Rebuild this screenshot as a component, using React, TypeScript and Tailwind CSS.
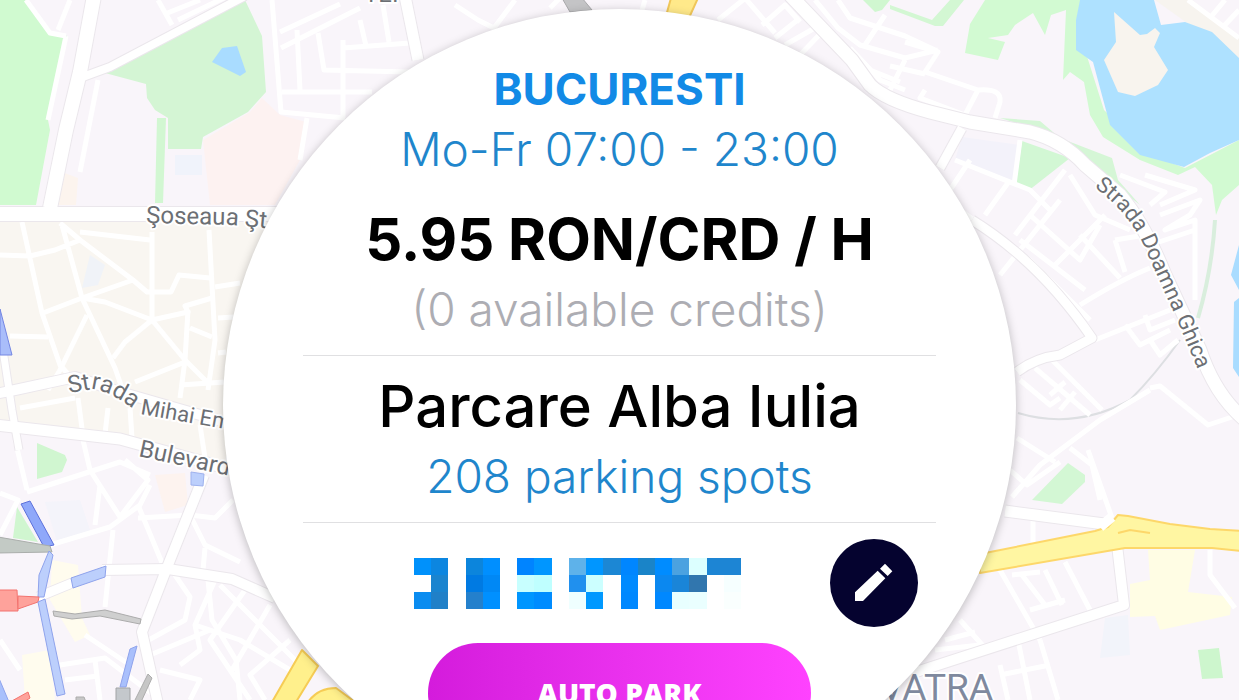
import React from "react";

const ROAD_MINOR = [
  // north-west blocks
  "M98,80 L80,172 M158,0 L172,25 M165,14 L200,0 M178,20 L232,-6 M26,0 L50,33 L66,36 M48,120 L66,36 M70,0 L58,30",
  "M272,0 L281,112 L345,118 M280,32 L340,4 M281,48 L360,8 M297,30 L300,90 M282,92 L372,92 M307,118 L300,160 M318,33 L324,70 L410,72 M343,40 L343,118 M343,48 L410,43 M360,20 L366,46 M383,5 L389,42 M455,5 L478,20 L494,28 L515,0",
  "M645,0 L642,10 M560,-2 L550,8",
  // north-east blocks
  "M718,20 L748,-4 M745,-2 L775,33 M762,25 L785,5 L800,22 M775,38 L800,18 M785,45 L820,25 M800,55 L822,32 M815,0 L838,28 L860,45 L905,58 L938,50 M838,0 L850,18 L905,36 L935,50 M865,45 L885,15 M905,60 L890,90 M850,48 L880,80 L905,90 M870,70 L900,82",
  "M905,42 L938,52 L925,72 L978,90 L965,115 L920,98 L925,90 M978,90 Q1002,88 1000,102 L995,118 M890,66 L925,74",
  "M1188,0 L1239,38 M1210,18 L1225,0 M1222,28 L1239,10 M955,160 L1030,190 L1050,210 M1020,140 L1014,185 M950,190 L970,160 M985,215 L1010,180 M1015,235 L1065,170 M1030,215 L1080,260 L1100,225 M1070,175 L1095,215 L1130,230 M960,210 L1030,260 L1090,320 M1000,275 L1060,200 M1020,240 L1085,290 M1055,265 L1105,215 M1080,235 L1120,278 M1080,305 Q1120,280 1150,268 M1115,240 L1125,272 M1115,240 L1145,235",
  "M1120,175 L1165,192 L1150,205 M1145,175 L1195,190 L1160,205 M1160,215 L1200,200 L1190,215 L1165,230 L1195,220 L1195,300 M1150,245 L1195,230",
  // eastern blocks
  "M1095,340 L1170,310 M1125,325 L1140,345 L1170,330 M1145,315 L1150,330 L1175,320 M1150,340 L1160,355 L1178,340 M1020,380 L1050,405 L1060,398 M1035,368 L1090,415 M1052,360 L1102,410 M1050,395 L1065,382 M1060,410 L1075,392 M1150,388 L1160,386 L1208,425 L1235,416",
  "M1150,390 L1100,420 L1040,465 L1012,497 M1017,438 L1055,462 M1070,448 L1092,465 L1100,500 M1010,470 L1027,485 L1060,462 M1088,450 L1112,518 M1033,520 L1033,545",
  "M1000,570 L1040,640 M1012,575 L1040,572 M1022,575 L1045,605 M1045,570 L1062,605 M1065,562 L1090,610 M1030,610 L1065,600 M960,620 L985,648 M945,640 L975,632 M935,650 L980,645 M1210,550 L1210,575 L1235,608 M1000,665 L1008,700 M1018,640 L1030,700 M1040,640 L1058,700 M1000,675 L1050,665",
  // old-town blocks
  "M0,255 L30,256 L55,250 L80,240 L60,223 M22,222 L42,313 L60,365 L75,382 M62,225 L82,298 L115,368 L122,388 M80,232 L150,240 M80,240 L133,280 L147,292 L171,292 L179,275 L210,278",
  "M152,232 L152,320 M133,280 L82,298 L43,313 M82,298 L105,302 L152,320 L188,312 L185,306 L212,298 M152,320 L125,342 L113,358 M152,320 L185,360 L210,385 M209,230 L215,340 L208,390 M87,315 L60,370 L48,390",
  "M188,310 L185,360 L180,398 M135,382 L185,362 M190,328 L212,337 M10,336 L48,337 M215,287 L240,283 M218,318 L234,317 M218,353 L226,352 M180,385 L225,382 M20,408 L75,398 M78,398 L83,436 M108,408 L105,434 M130,408 L132,438 M200,425 L205,458",
  // south-western blocks
  "M15,440 L27,490 M0,493 L18,500 L0,535 M27,492 L120,462 L150,475 M83,440 L90,470 L120,517 L148,480 L125,460 M100,485 L95,525 M50,545 L110,527 L140,505 L150,485 M138,505 L165,570 M113,530 L105,607 M138,518 L190,515 L215,518 L233,500",
  "M190,515 L205,545 L240,562 M205,548 L203,570 M208,580 L212,620 L236,660 L240,700 M175,575 L190,597 L185,620 L145,642 M210,630 L150,655 M215,580 L195,625 L200,650 L180,665 M220,585 L300,665 M245,590 L210,640 L250,700 M270,605 L232,670 M195,625 L240,640 L290,670 M160,670 L200,680 L190,700 M290,640 L250,675 L265,700",
  "M0,640 L20,670 M60,665 L105,658 L160,700 M95,660 L100,700 M85,635 L130,665 M65,680 L98,676",
];

const ROAD_MAIN = [
  { d: "M94,-4 L80,72 L66,130 L50,208", w: 14 },
  { d: "M-5,214 L280,214 L310,222", w: 14 },
  { d: "M80,78 L110,67 L245,-4", w: 8 },
  { d: "M405,-4 L418,60", w: 11 },
  { d: "M-5,394 L15,390 L75,377 L120,392 L235,425", w: 10 },
  { d: "M3,350 L12,410 L19,450", w: 7 },
  { d: "M-5,425 L120,439 L240,472", w: 11 },
  { d: "M204,475 L168,565 L142,632 L158,704", w: 10 },
  { d: "M102,570 L168,569 L232,579 L275,598", w: 10 },
  { d: "M38,597 L72,583", w: 9 },
  { d: "M790,-5 L852,60 L870,85 Q885,100 930,112 L970,122 L1030,132 Q1062,140 1085,165 L1120,195 Q1145,225 1165,275 L1200,350 Q1215,395 1245,420", w: 13 },
  { d: "M972,220 Q1040,262 1092,338 L1060,355 Q1035,358 1017,372", w: 9 },
  { d: "M962,128 L940,168", w: 9 },
  { d: "M1005,511 L1112,525", w: 11 },
  { d: "M1117,545 L1124,605 L1040,632 L910,674", w: 10 },
];

type Shape = { d: string; fill: string; stroke?: string };

const AREAS: Shape[] = [
  { d: "M0,222 L300,222 L240,470 L120,440 L0,424Z", fill: "#f9f6f1" },
  { d: "M0,0 L25,0 L52,32 L67,36 L48,120 L50,130 L36,205 L0,205Z", fill: "#d0fad0" },
  { d: "M105,73 L245,0 L262,36 L266,92 L248,112 L203,137 L201,149 L168,149 L168,118 L155,110 L147,98 L146,84Z", fill: "#d4f5d4" },
  { d: "M157,118 L166,118 L163,203 L155,203Z", fill: "#d2f7d2" },
  { d: "M212,62 L222,48 L237,46 L246,72 L240,76Z", fill: "#a9dcff" },
  { d: "M203,140 L250,112 L262,98 L280,115 L306,122 L300,160 L275,205 L210,205Z", fill: "#fdf2f1" },
  { d: "M175,155 L202,155 L202,175 L175,175Z", fill: "#f0f3fb" },
  { d: "M62,172 L78,178 L76,205 L58,205Z", fill: "#fcf4ee" },
  { d: "M90,255 L105,265 L98,285 L82,288Z", fill: "#f0f3f8" },
  { d: "M37,443 L65,455 L67,460 L62,472 L37,479Z", fill: "#d0f6d0" },
  { d: "M17,507 L38,542 L13,538Z", fill: "#d0f6d0" },
  { d: "M155,475 L185,473 L188,505 L165,512Z", fill: "#fdf3ef" },
  { d: "M45,502 L80,500 L90,530 L58,545Z", fill: "#f4f4fa" },
  { d: "M52,560 L78,565 L82,618 L90,635 L75,642 L50,600Z", fill: "#fffcee" },
  { d: "M22,655 L50,650 L55,700 L25,700Z", fill: "#fffcee" },
  { d: "M863,0 L890,0 L882,10 L875,12Z", fill: "#d0f7d0" },
  { d: "M890,5 L932,20 L950,0 L964,0 L943,26 L935,26 L890,9Z", fill: "#d3f7d3" },
  { d: "M985,0 L1085,0 L1085,50 L1104,110 L1150,155 L1185,168 L1239,140 L1239,185 L1222,200 L1216,215 L1212,185 L1195,167 L1178,175 L1140,160 L1103,137 L1090,115 L1084,82 L1070,72 L1063,80 L1066,10 L1051,15 L1045,35 L1033,13 L1015,25 L1008,35 L988,38 L1005,42 L998,60 L965,53 L970,24Z", fill: "#d2fad2" },
  { d: "M1000,118 L1040,121 L1060,138 L1112,158 L1118,180 L1140,205 L1115,185 L1085,165 L1050,133Z", fill: "#d5f6d6" },
  { d: "M1022,141 L1070,158 L1028,191 L1016,183Z", fill: "#d2f7d4" },
  { d: "M1155,0 L1192,0 L1239,38 L1239,60Z", fill: "#f7f4ef" },
  { d: "M1080,0 L1154,0 L1161,25 L1185,22 L1212,32 L1239,58 L1239,140 L1210,153 L1184,167 L1140,155 L1110,125 L1093,62 L1076,50 L1076,20Z", fill: "#aee1ff" },
  { d: "M1114,12 L1140,35 L1147,34 L1155,28 L1160,33 L1154,47 L1168,70 L1158,85 L1135,96 L1118,92 L1104,60 L1116,42Z", fill: "#f8f4ee" },
  { d: "M1239,245 L1231,275 L1239,290Z M1239,298 L1234,302 L1233,368 L1239,377Z", fill: "#a9dcff" },
  { d: "M962,137 L1020,145 L1012,183 L955,160Z", fill: "#f3f2fa" },
  { d: "M1032,500 L1068,463 L1085,475 L1085,482 L1062,504Z", fill: "#d3f7d4" },
  { d: "M1148,550 L1195,550 L1188,592 L1232,597 L1230,615 L1160,630 L1155,616 L1130,617 L1130,584 L1150,580Z", fill: "#fffde4" },
  { d: "M1198,650 L1219,648 L1223,678 L1202,679Z", fill: "#cdf6cd" },
  { d: "M1105,618 L1128,615 L1130,655 L1100,658Z", fill: "#f2f4fa" },
];

const TRAFFIC: Shape[] = [
  { d: "M0,309 L12,355 L0,355Z", fill: "#a9bdfa", stroke: "#7486e2" },
  { d: "M21,504 L30,501 L54,545 L44,547Z", fill: "#8fa8fa", stroke: "#5c70da" },
  { d: "M-2,537 L50,546 L52,552 L-2,553Z", fill: "#c3cac5", stroke: "#aaaeab" },
  { d: "M49,551 L53,555 L44,597 L38,597 L39,575Z", fill: "#bccffc", stroke: "#8fa3ec" },
  { d: "M71,578 L106,566 L105,577 L73,588Z", fill: "#bccffc", stroke: "#8fa3ec" },
  { d: "M-2,590 L17,590 L18,611 L-2,611Z", fill: "#fea29b", stroke: "#f3736f" },
  { d: "M18,596 L39,597 L38,602 L18,609Z", fill: "#fea29b", stroke: "#f3736f" },
  { d: "M38,602 L45,599 L65,694 L57,696Z", fill: "#bccffc", stroke: "#8fa3ec" },
  { d: "M53,611 L75,614 L105,610 L141,619 L140,624 L100,616 L72,619 L54,616Z", fill: "#cfcfcf", stroke: "#acacac" },
  { d: "M130,649 L137,646 L126,687 L120,687Z", fill: "#a9c0fc", stroke: "#8fa3ec" },
  { d: "M116,688 L130,688 L130,702 L116,702Z", fill: "#c4c8cc", stroke: "#a2a4a6" },
  { d: "M148,674 L152,678 L141,702 L134,702Z", fill: "#c6c6c6", stroke: "#acacac" },
  { d: "M76,697 L84,697 L86,702 L76,702Z", fill: "#c6c6c6", stroke: "#acacac" },
  { d: "M-2,676 L9,702 L-2,702Z", fill: "#a9c0fc", stroke: "#8fa3ec" },
  { d: "M10,702 L28,692 L30,698 L24,702Z", fill: "#fea29b", stroke: "#f3736f" },
  { d: "M191,472 L204,474 L203,486 L191,485Z", fill: "#bccffc", stroke: "#9fb2ee" },
  { d: "M562,-2 L582,-2 L592,10 L570,12Z", fill: "#c4c4c6", stroke: "#a8a8aa" },
];

const HIGHWAYS: Shape[] = [
  { d: "M671,-2 L698,-2 L688,20 L666,16Z", fill: "#ffe98a", stroke: "#f0c75a" },
  { d: "M302,650 L318,666 L296,702 L272,702Z", fill: "#fff08c", stroke: "#f6cc55" },
  { d: "M308,702 Q318,688 336,688 L355,702Z", fill: "#fff08c", stroke: "#f6cc55" },
  { d: "M980,554 L1095,531 L1108,527 L1118,515 L1128,516 L1170,524 L1210,529 L1242,531 L1242,551 L1212,548 L1125,548 L980,573Z", fill: "#fff6a2", stroke: "#fdd76a" },
];

function CityMap() {
  return (
    <svg
      className="absolute inset-0 h-full w-full"
      viewBox="0 0 1239 700"
      preserveAspectRatio="xMidYMid slice"
      fontFamily="Roboto, sans-serif"
      fill="none"
      aria-hidden="true"
    >
      <defs>
        <path id="mihai" d="M140,414 L270,437" />
        <path id="strada" d="M69,393 L93,389 Q112,392 136,411" />
        <path id="bulevard" d="M138,456 L280,487" />
        <path id="sosea" d="M146,223 L230,225 L330,234" />
        <path id="ghica" d="M1094,187 Q1128,212 1143,244 Q1160,282 1178,322 L1215,410" />
      </defs>
      <rect width="1239" height="700" fill="#f9f5fa" />
      {AREAS.map((a) => (
        <path key={a.d} d={a.d} fill={a.fill} />
      ))}
      <path d="M1215,220 Q1212,270 1198,318" stroke="#d9eedd" strokeWidth="4" />
      <path d="M1018,413 Q1075,430 1130,400 Q1155,375 1180,340" stroke="#dddfe2" strokeWidth="2" />
      {ROAD_MINOR.map((d) => (
        <path key={d} d={d} stroke="#ffffff" strokeWidth="5" strokeLinejoin="round" />
      ))}
      {ROAD_MAIN.map((r) => (
        <path key={r.d} d={r.d} stroke="#ebe7ec" strokeWidth={r.w + 2} strokeLinejoin="round" />
      ))}
      {ROAD_MAIN.map((r) => (
        <path key={r.d} d={r.d} stroke="#ffffff" strokeWidth={r.w} strokeLinejoin="round" />
      ))}
      {HIGHWAYS.map((a) => (
        <path key={a.d} d={a.d} fill={a.fill} stroke={a.stroke} strokeWidth="2" strokeLinejoin="round" />
      ))}
      <path d="M1100,527 L1112,517" stroke="#ffffff" strokeWidth="10" />
      <path d="M1118,533 L1130,530 L1150,533" stroke="#fdd76a" strokeWidth="2" />
      {TRAFFIC.map((a) => (
        <path key={a.d} d={a.d} fill={a.fill} stroke={a.stroke} strokeWidth="1" />
      ))}
      <g fill="#6c6f74" stroke="#ffffff" strokeWidth="4" strokeLinejoin="round" paintOrder="stroke">
        <text fontSize="24">
          <textPath href="#sosea">Şoseaua Şt</textPath>
        </text>
        <text fontSize="24">
          <textPath href="#strada">Strada</textPath>
        </text>
        <text fontSize="22">
          <textPath href="#mihai">Mihai Em</textPath>
        </text>
        <text fontSize="24">
          <textPath href="#bulevard">Bulevard</textPath>
        </text>
        <text fontSize="22">
          <textPath href="#ghica">Strada Doamna Ghica</textPath>
        </text>
        <text x="364" y="2" fontSize="24">TEI</text>
        <text x="880" y="700" fontSize="37" fill="#7f899e">VATRA</text>
      </g>
    </svg>
  );
}

const PLATE_ROWS: (string | null)[][] = [
  ["#0091fb", "#0c86e0", null, "#0c85dc", "#008fff", null, "#0084ff", "#0096ff", null, "#5eb2ea", "#0096ff", "#1c87d4", "#0086ff", "#1a84c8", "#008cff", "#4ba2e0", "#dcffff", "#1d85d4", "#1d85d4"],
  [null, "#1a84cf", null, "#007ae2", "#0088f5", null, "#c8ffff", "#bfffff", null, "#2090ee", "#ccffff", null, "#008aff", null, "#0b88f0", "#1a85d8", "#3176ae", null, "#f6ffff"],
  ["#0a8cf0", "#2080c8", null, "#2480cc", "#0090ff", null, "#0096ff", "#008cff", null, "#efffff", "#0099ff", null, "#0088ff", null, "#0088ff", "#e8ffff", "#eaffff", null, "#fafffe"],
];

function HiddenPlate() {
  return (
    <svg className="h-[51px] w-[327px]" viewBox="0 0 19 3" preserveAspectRatio="none" shapeRendering="crispEdges" role="img" aria-label="Hidden licence plate">
      {PLATE_ROWS.map((row, y) =>
        row.map((fill, x) => (fill ? <rect key={`${x}-${y}`} x={x} y={y} width="1" height="1" fill={fill} /> : null)),
      )}
    </svg>
  );
}

export default function App() {
  return (
    <main className="relative flex h-screen items-start justify-center overflow-hidden bg-[#f9f5fa] pt-[9px] font-['Inter',sans-serif]">
      <CityMap />
      <section className="relative flex aspect-square w-[64vw] min-w-[720px] shrink-0 flex-col items-center rounded-full bg-white px-[80px] pt-[50px] text-center whitespace-nowrap shadow-[0_2px_10px_rgba(0,0,0,0.25)]">
        <h1 className="text-[44px] leading-[60px] font-bold text-[#128ae6]">BUCURESTI</h1>
        <p className="text-[46px] leading-[60px] font-light text-[#1f86cc]">Mo-Fr 07:00 - 23:00</p>
        <div className="mt-5 w-full border-b border-[#e0e0e2] pb-4">
          <p className="text-[58px] leading-[80px] font-bold text-black">5.95 RON/CRD / H</p>
          <p className="text-[46px] leading-[60px] font-light text-[#adadb3]">(0 available credits)</p>
        </div>
        <div className="w-full border-b border-[#e0e0e2] pt-[10px] pb-4">
          <h2 className="text-[58px] leading-[80px] font-medium text-black">Parcare Alba Iulia</h2>
          <p className="text-[46px] leading-[60px] font-light text-[#1f86cc]">208 parking spots</p>
        </div>
        <div className="flex w-full items-center justify-between pt-4 pr-[18px] pl-[111px]">
          <HiddenPlate />
          <button type="button" aria-label="Edit" className="flex h-[88px] w-[88px] items-center justify-center rounded-full bg-[#05032f]">
            <svg className="h-full w-full" viewBox="62 54 264 264" fill="#ffffff">
              <path d="M137,214 L205,149 L228,172 L161,240 L137,240Z M212,143 L227,128 L249,151 L235,165Z" />
            </svg>
          </button>
        </div>
        <button type="button" className="mt-4 h-[100px] w-[383px] shrink-0 rounded-full bg-linear-to-r from-[#d41bdc] to-[#ff42ff] font-['Open_Sans',sans-serif] text-[28px] font-extrabold text-white">
          AUTO PARK
        </button>
      </section>
    </main>
  );
}
